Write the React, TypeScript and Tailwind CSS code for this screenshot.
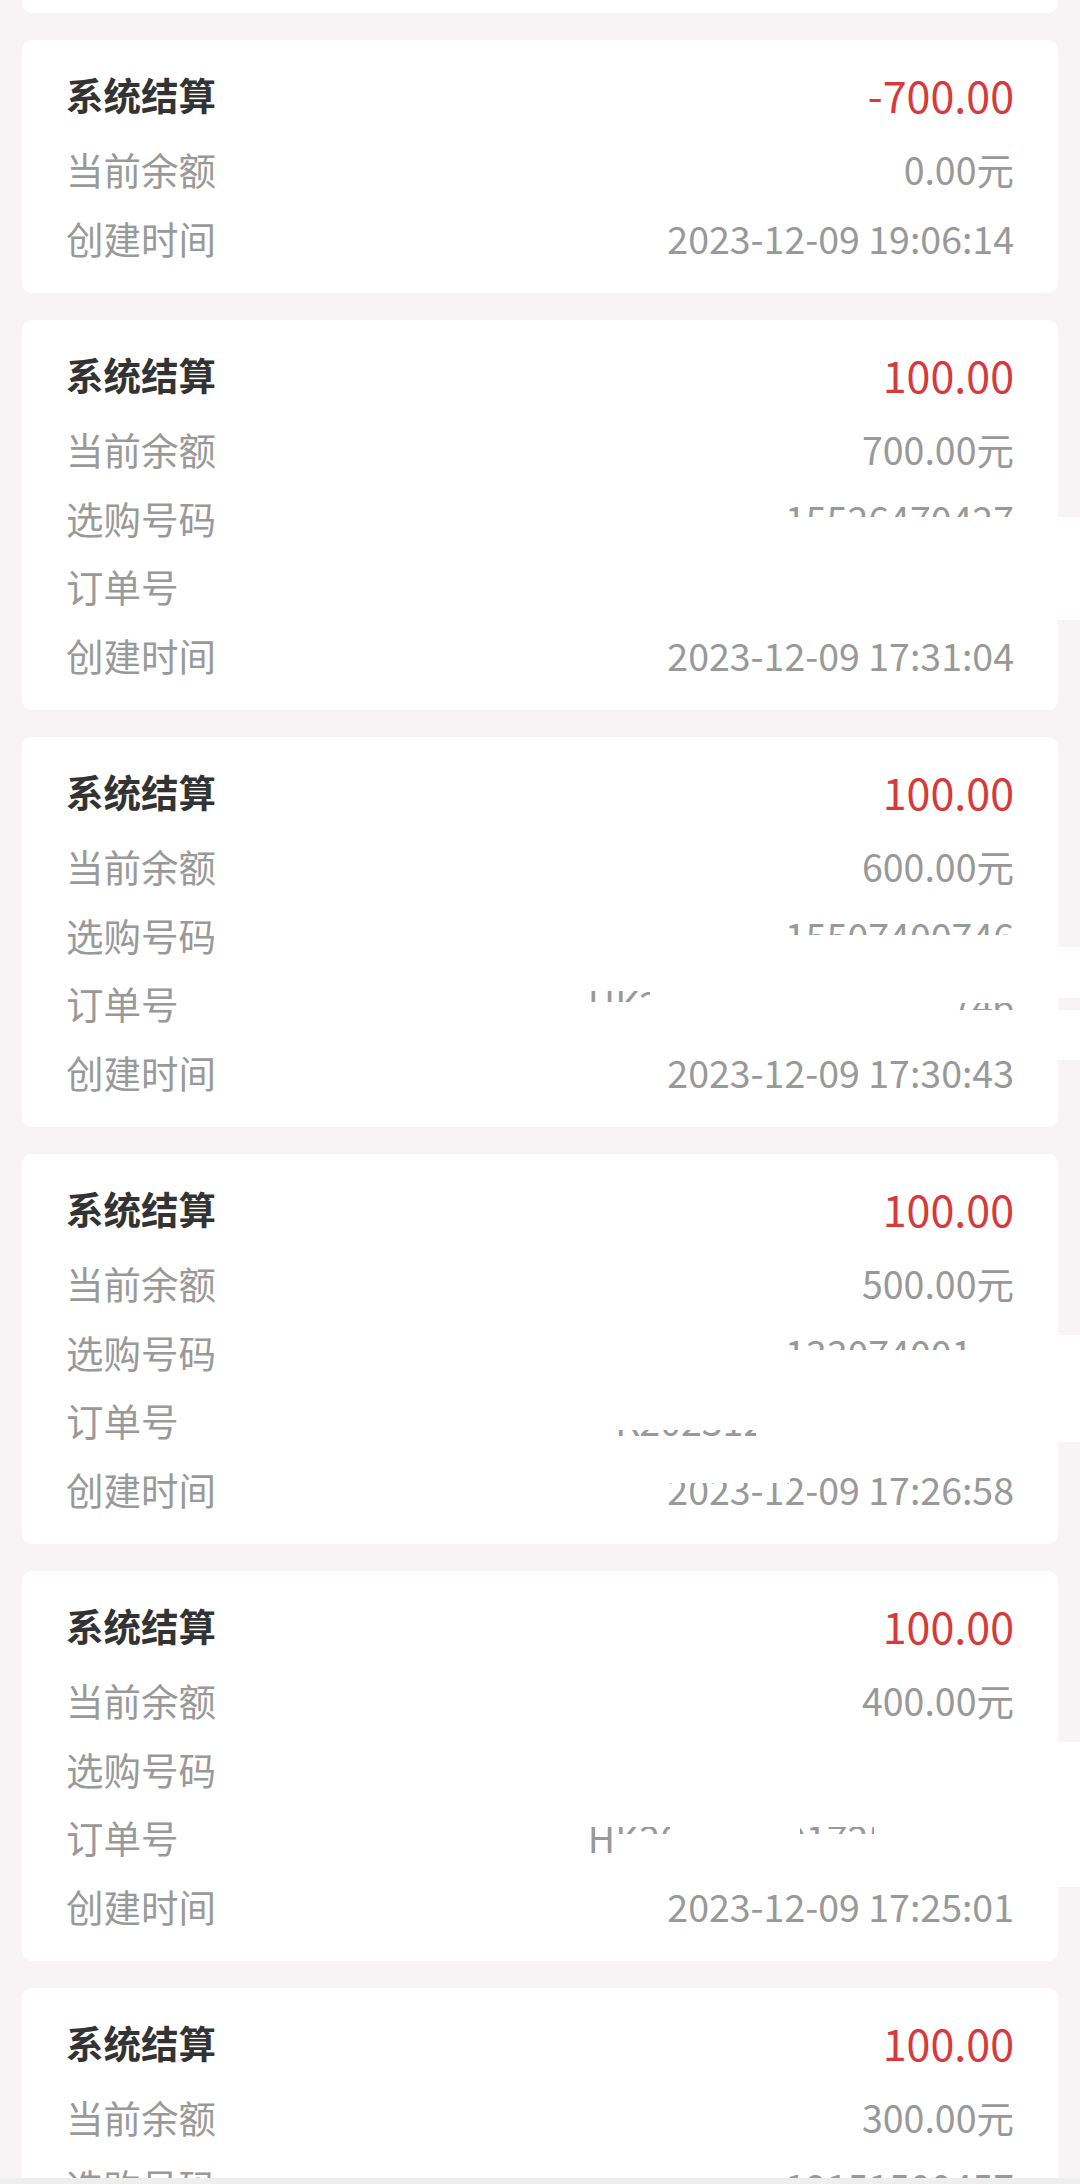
import React from "react";

type Row = { label: string; value: string };

type Record = {
  amount: string;
  rows: Row[];
};

const RECORDS: Record[] = [
  {
    amount: "-700.00",
    rows: [
      { label: "当前余额", value: "0.00元" },
      { label: "创建时间", value: "2023-12-09 19:06:14" },
    ],
  },
  {
    amount: "100.00",
    rows: [
      { label: "当前余额", value: "700.00元" },
      { label: "选购号码", value: "15526470427" },
      { label: "订单号", value: "HK202312091731047421" },
      { label: "创建时间", value: "2023-12-09 17:31:04" },
    ],
  },
  {
    amount: "100.00",
    rows: [
      { label: "当前余额", value: "600.00元" },
      { label: "选购号码", value: "15507400746" },
      { label: "订单号", value: "HK202312091730437746" },
      { label: "创建时间", value: "2023-12-09 17:30:43" },
    ],
  },
  {
    amount: "100.00",
    rows: [
      { label: "当前余额", value: "500.00元" },
      { label: "选购号码", value: "13307400106" },
      { label: "订单号", value: "HK202312091726580106" },
      { label: "创建时间", value: "2023-12-09 17:26:58" },
    ],
  },
  {
    amount: "100.00",
    rows: [
      { label: "当前余额", value: "400.00元" },
      { label: "选购号码", value: "18851709331" },
      { label: "订单号", value: "HK202312091725019331" },
      { label: "创建时间", value: "2023-12-09 17:25:01" },
    ],
  },
  {
    amount: "100.00",
    rows: [
      { label: "当前余额", value: "300.00元" },
      { label: "选购号码", value: "19151500457" },
      { label: "订单号", value: "HK202312091723120457" },
      { label: "创建时间", value: "2023-12-09 17:23:12" },
    ],
  },
];

// white cover-ups painted over the phone / order numbers in the screenshot
const PATCHES = [
  { l: 575, t: 517, w: 505, h: 103 },

  { l: 575, t: 935, w: 482, h: 12 },
  { l: 575, t: 947, w: 505, h: 43 },
  { l: 650, t: 990, w: 430, h: 8 },
  { l: 650, t: 998, w: 407, h: 5 },
  { l: 575, t: 1002, w: 376, h: 58 },
  { l: 951, t: 1010, w: 129, h: 50 },

  { l: 575, t: 1350, w: 395, h: 80 },
  { l: 970, t: 1335, w: 110, h: 107 },
  { l: 756, t: 1430, w: 214, h: 12 },
  { l: 575, t: 1430, w: 40, h: 7 },
  { l: 600, t: 1437, w: 190, h: 46 },

  { l: 575, t: 1742, w: 505, h: 85 },
  { l: 614, t: 1834, w: 466, h: 53 },
  { l: 670, t: 1827, w: 130, h: 7 },
  { l: 874, t: 1827, w: 206, h: 7 },
];

function RecordCard({ record }: { record: Record }) {
  return (
    <div className="rounded-[10px] bg-white px-[44px] pt-[20px] pb-[21px]">
      <div className="flex h-[68px] items-center justify-between">
        <span className="text-[37.5px] font-bold text-[#333333]">系统结算</span>
        <span className="text-[43px] text-[#d63a3a]">{record.amount}</span>
      </div>
      <div className="mt-[7px] flex flex-col">
        {record.rows.map((row) => (
          <div key={row.label} className="flex h-[68.5px] items-center justify-between text-[37.5px] text-[#999999]">
            <span>{row.label}</span>
            <span>{row.value}</span>
          </div>
        ))}
      </div>
    </div>
  );
}

export default function App() {
  return (
    <div className="flex h-[2184px] w-[1080px] flex-col overflow-hidden bg-[#f8f4f6] font-[family-name:Noto_Sans_CJK_SC,sans-serif]">
      <div className="relative flex-1 overflow-hidden">
        <div className="flex flex-col gap-[27px] px-[22px]">
          <div className="h-[13px] rounded-b-[10px] bg-white" />
          {RECORDS.map((r, i) => (
            <RecordCard key={i} record={r} />
          ))}
        </div>
        {PATCHES.map((p, i) => (
          <div
            key={i}
            className="absolute bg-white"
            style={{ left: p.l, top: p.t, width: p.w, height: p.h }}
          />
        ))}
      </div>
      <div className="h-[6px] bg-[#eeeeee]" />
    </div>
  );
}
